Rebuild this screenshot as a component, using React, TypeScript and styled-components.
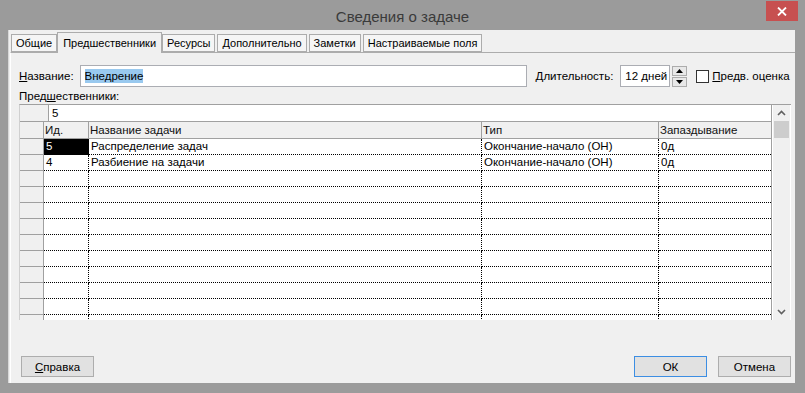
import React from "react";
import styled, { createGlobalStyle } from "styled-components";

const GlobalStyle = createGlobalStyle`
  html, body { margin: 0; padding: 0; background: #9b9b9b; }
  body { font-family: "Liberation Sans", Arial, sans-serif; font-size: 11.5px; color: #000; }
`;

type Row = { id: string; name: string; type: string; lag: string };

const rows: Row[] = [
  { id: "5", name: "Распределение задач", type: "Окончание-начало (ОН)", lag: "0д" },
  { id: "4", name: "Разбиение на задачи", type: "Окончание-начало (ОН)", lag: "0д" },
];
const EMPTY_ROWS = 10;

const tabs = ["Общие", "Предшественники", "Ресурсы", "Дополнительно", "Заметки", "Настраиваемые поля"];

const Window = styled.div`
  width: 805px;
  height: 393px;
  background: #9b9b9b;
  display: flex;
  flex-direction: column;
  overflow: hidden;
`;

const TitleBar = styled.div`
  height: 30px;
  display: grid;
  grid-template-columns: 1fr auto 1fr;
  align-items: start;
`;

const Title = styled.div`
  grid-column: 2;
  font-size: 15px;
  color: #3a3a3a;
  padding-top: 8px;
`;

const CloseBtn = styled.div`
  grid-column: 3;
  justify-self: end;
  width: 32px;
  height: 20px;
  margin: 1px 7px 0 0;
  background: #c75050;
  color: #fff;
  display: flex;
  align-items: center;
  justify-content: center;
`;

const Client = styled.div`
  margin: 0 10px 0 8px;
  height: 353px;
  background: #f0f0f0;
  border-left: 1px solid #d8d8d8;
  display: flex;
  flex-direction: column;
`;

const TabStrip = styled.div`
  display: flex;
  align-items: flex-end;
  height: 21px;
  padding-left: 1px;
  margin-top: 1px;
`;

const Tab = styled.div<{ $active?: boolean }>`
  height: ${(p) => (p.$active ? 21 : 18)}px;
  padding: 0 ${(p) => (p.$active ? 5 : 4)}px;
  margin-right: ${(p) => (p.$active ? 0 : 2)}px;
  margin-left: ${(p) => (p.$active ? -2 : 0)}px;
  box-sizing: border-box;
  border: 1px solid #acacac;
  border-bottom: ${(p) => (p.$active ? "none" : "1px solid #acacac")};
  background: ${(p) => (p.$active ? "#f0f0f0" : "#f5f5f5")};
  font-size: 11px;
  display: flex;
  align-items: center;
  position: relative;
  z-index: ${(p) => (p.$active ? 1 : 0)};
  margin-bottom: ${(p) => (p.$active ? -1 : 0)}px;
  white-space: nowrap;
  &:first-child { margin-left: 1px; }
`;

const Panel = styled.div`
  flex: 1;
  border-top: 1px solid #acacac;
  border-left: 1px solid #ffffff;
  margin-left: 1px;
  display: flex;
  flex-direction: column;
  padding: 12px 4px 0 8px;
`;

const FieldRow = styled.div`
  display: flex;
  align-items: center;
  height: 22px;
`;

const Label = styled.span<{ $gap?: number; $lead?: number }>`
  margin-right: ${(p) => p.$gap ?? 8}px;
  margin-left: ${(p) => p.$lead ?? 0}px;
  white-space: nowrap;
  flex-shrink: 0;
  color: #000;
`;

const U = styled.span`
  text-decoration: underline;
  text-underline-offset: 1px;
`;

const TextBox = styled.div<{ $w: number }>`
  width: ${(p) => p.$w}px;
  flex-shrink: 0;
  height: 22px;
  box-sizing: border-box;
  border: 1px solid #abadb3;
  background: #fff;
  display: flex;
  align-items: center;
  padding-left: 4px;
  white-space: nowrap;
  overflow: hidden;
`;

const Selected = styled.span`
  background: #99c9ef;
  padding: 1px 0;
`;

const Spinner = styled.div`
  margin-left: 2px;
  width: 15px;
  height: 21px;
  flex-shrink: 0;
  display: flex;
  flex-direction: column;
  gap: 1px;
`;

const SpinBtn = styled.div`
  flex: 1;
  border: 1px solid #acacac;
  background: #e8e8e8;
  display: flex;
  align-items: center;
  justify-content: center;
`;

const CheckBox = styled.div`
  width: 13px;
  height: 13px;
  flex-shrink: 0;
  box-sizing: border-box;
  border: 1px solid #333;
  background: #fff;
  margin: 0 3px 0 9px;
`;

const SubLabel = styled.div`
  margin-top: 2px;
  height: 14px;
  line-height: 14px;
`;

const Grid = styled.div`
  margin-top: 1px;
  width: 772px;
  height: 216px;
  box-sizing: border-box;
  border-top: 1px solid #a0a0a0;
  border-left: 1px solid #d0d0d0;
  background: #fff;
  display: grid;
  grid-template-columns: 752px 1fr;
  overflow: hidden;
`;

const Sheet = styled.div`
  display: flex;
  flex-direction: column;
  overflow: hidden;
  border-right: 1px solid #a0a0a0;
`;

const EditBar = styled.div`
  display: flex;
  height: 16px;
  flex-shrink: 0;
  border-bottom: 1px solid #a0a0a0;
`;

const EditCorner = styled.div`
  width: 28px;
  background: #f0f0f0;
  border-right: 1px solid #a0a0a0;
`;

const EditValue = styled.div`
  padding-left: 3px;
  line-height: 16px;
`;

const cols = "24px 45px 393px 177px 1fr";

const HeaderRow = styled.div`
  display: grid;
  grid-template-columns: ${cols};
  height: 16px;
  flex-shrink: 0;
  background: #f0f0f0;
  border-bottom: 1px solid #a0a0a0;
`;

const HeadCell = styled.div`
  border-right: 1px solid #a0a0a0;
  line-height: 16px;
  padding-left: 1px;
  white-space: nowrap;
  color: #111;
  &:last-child { border-right: none; }
`;

const DataRow = styled.div`
  display: grid;
  grid-template-columns: ${cols};
  height: 16px;
  flex-shrink: 0;
`;

const RowHead = styled.div`
  background: #f0f0f0;
  border-right: 1px solid #a0a0a0;
  border-bottom: 1px solid #a0a0a0;
`;

const Cell = styled.div<{ $sel?: boolean }>`
  border-right: 1px dotted #000;
  border-bottom: 1px dotted #000;
  line-height: 15px;
  padding-left: 2px;
  white-space: nowrap;
  overflow: hidden;
  background: ${(p) => (p.$sel ? "#000" : "transparent")};
  color: ${(p) => (p.$sel ? "#fff" : "#000")};
  &:last-child { border-right: none; }
`;

const ScrollBar = styled.div`
  background: #f0f0f0;
  margin-right: 1px;
  display: flex;
  flex-direction: column;
  align-items: center;
  border-left: 1px solid #fff;
`;

const Thumb = styled.div`
  width: 15px;
  height: 17px;
  background: #cdcdcd;
`;

const Arrow = styled.div`
  height: 16px;
  display: flex;
  align-items: center;
  justify-content: center;
`;

const Fill = styled.div`
  flex: 1;
`;

const Footer = styled.div`
  margin-top: auto;
  display: flex;
  align-items: center;
  gap: 11px;
  padding: 0 0 6px 2px;
`;

const Button = styled.div<{ $primary?: boolean }>`
  width: 73px;
  height: 21px;
  box-sizing: border-box;
  border: 1px solid ${(p) => (p.$primary ? "#3c8ee3" : "#adadad")};
  background: #e1e1e1;
  display: flex;
  align-items: center;
  justify-content: center;
`;

const Chevron = ({ up }: { up?: boolean }) => (
  <svg width="9" height="6" viewBox="0 0 9 6">
    <path d={up ? "M1 5 L4.5 1.5 L8 5" : "M1 1 L4.5 4.5 L8 1"} stroke="#606060" strokeWidth="1.6" fill="none" />
  </svg>
);

const SmallTri = ({ up }: { up?: boolean }) => (
  <svg width="7" height="4" viewBox="0 0 7 4">
    <path d={up ? "M0 4 L3.5 0 L7 4 Z" : "M0 0 L3.5 4 L7 0 Z"} fill="#000" />
  </svg>
);

const App = () => {
  return (
    <Window>
      <GlobalStyle />
      <TitleBar>
        <Title>Сведения о задаче</Title>
        <CloseBtn>
          <svg width="10" height="9" viewBox="0 0 10 9">
            <path d="M1 0.5 L9 8.5 M9 0.5 L1 8.5" stroke="#fff" strokeWidth="1.8" />
          </svg>
        </CloseBtn>
      </TitleBar>
      <Client>
        <TabStrip>
          {tabs.map((t) => (
            <Tab key={t} $active={t === "Предшественники"}>{t}</Tab>
          ))}
        </TabStrip>
        <Panel>
          <FieldRow>
            <Label $gap={6}><U>Н</U>азвание:</Label>
            <TextBox $w={447}><Selected>Внедрение</Selected></TextBox>
            <Label $gap={7} $lead={9}><U>Д</U>лительность:</Label>
            <TextBox $w={50}>12 дней</TextBox>
            <Spinner>
              <SpinBtn><SmallTri up /></SpinBtn>
              <SpinBtn><SmallTri /></SpinBtn>
            </Spinner>
            <CheckBox />
            <Label><U>П</U>редв. оценка</Label>
          </FieldRow>
          <SubLabel>Пред<U>ш</U>ественники:</SubLabel>
          <Grid>
            <Sheet>
              <EditBar>
                <EditCorner />
                <EditValue>5</EditValue>
              </EditBar>
              <HeaderRow>
                <HeadCell />
                <HeadCell>Ид.</HeadCell>
                <HeadCell>Название задачи</HeadCell>
                <HeadCell>Тип</HeadCell>
                <HeadCell>Запаздывание</HeadCell>
              </HeaderRow>
              {rows.map((r, i) => (
                <DataRow key={r.id}>
                  <RowHead />
                  <Cell $sel={i === 0}>{r.id}</Cell>
                  <Cell>{r.name}</Cell>
                  <Cell>{r.type}</Cell>
                  <Cell>{r.lag}</Cell>
                </DataRow>
              ))}
              {Array.from({ length: EMPTY_ROWS }).map((_, i) => (
                <DataRow key={"e" + i}>
                  <RowHead />
                  <Cell />
                  <Cell />
                  <Cell />
                  <Cell />
                </DataRow>
              ))}
            </Sheet>
            <ScrollBar>
              <Arrow><Chevron up /></Arrow>
              <Thumb />
              <Fill />
              <Arrow><Chevron /></Arrow>
            </ScrollBar>
          </Grid>
          <Footer>
            <Button><U>С</U>правка</Button>
            <Fill />
            <Button $primary>ОК</Button>
            <Button>Отмена</Button>
          </Footer>
        </Panel>
      </Client>
    </Window>
  );
};

export default App;
